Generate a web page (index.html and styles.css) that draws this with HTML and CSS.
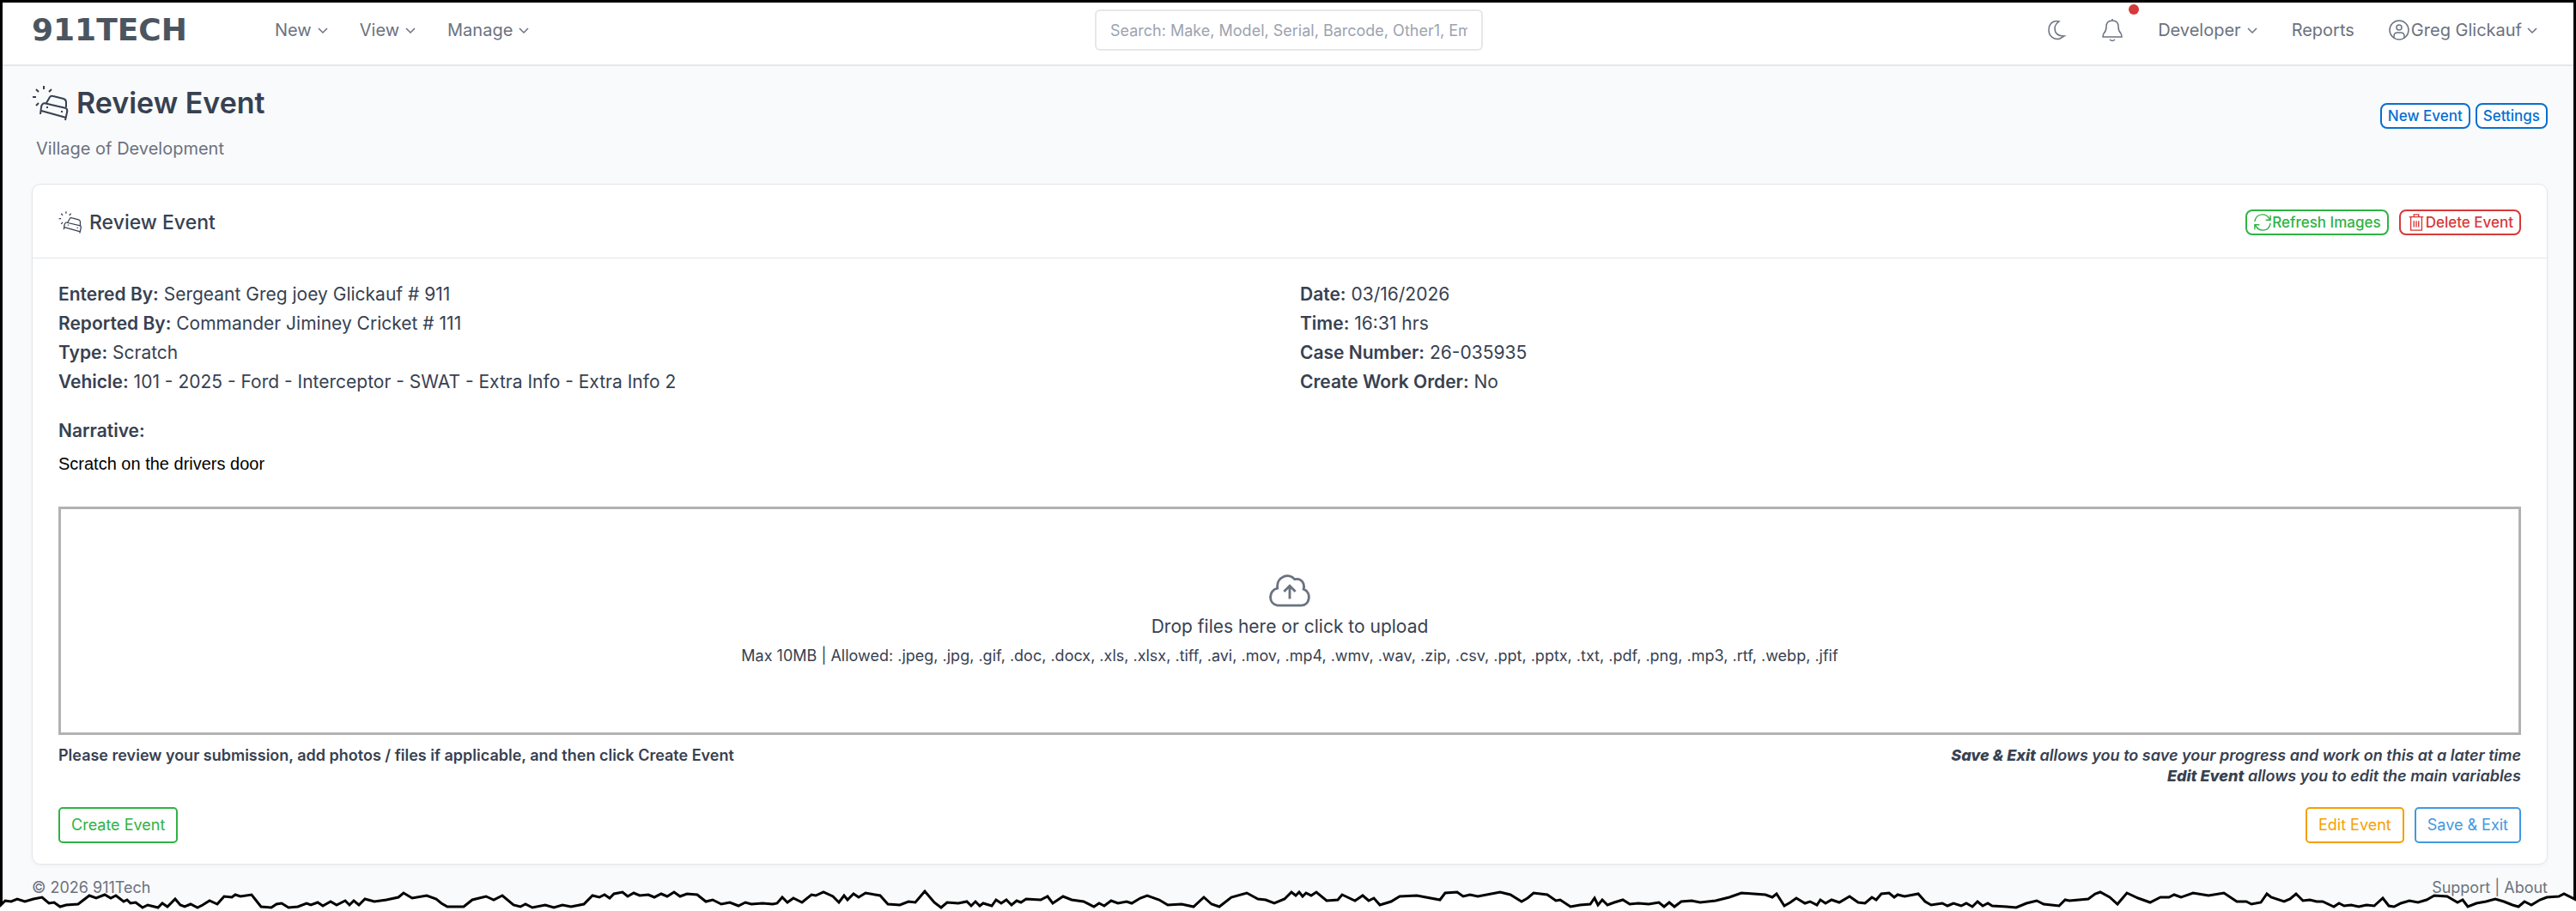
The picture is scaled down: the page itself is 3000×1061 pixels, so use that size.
FILE: index.html
```
<!DOCTYPE html>
<html lang="en">
<head>
    <meta charset="UTF-8">
    <meta name="viewport" content="width=device-width, initial-scale=1.0">
    <title>Review Event - 911Tech</title>
    <link rel="stylesheet" href="styles.css">
</head>
<body>
    <!-- shared icons -->
    <svg class="sprite" aria-hidden="true">
        <symbol id="i-chevron" viewBox="0 0 12 12"><path d="M1 4l5 5 5-5"/></symbol>
        <symbol id="i-crash" viewBox="0 0 44 44">
            <path d="M17 22l4-7q1-2 4-1l12 3q3 1 3 4v6M14 22l26 6M14 22q-3 2-3 5l-1 8M40 28q2 2 1 5l-2 9M11 31l29 8"/>
            <path d="M18 26v2M35 31v2M14 2v4M5 6l3 3M23 6l-3 3M1 15h4M5 25l3-3"/>
        </symbol>
    </svg>

    <div class="page">
        <header class="navbar">
            <a href="#" class="brand">911TECH</a>
            <nav class="menu">
                <a href="#">New <svg class="chevron"><use href="#i-chevron"/></svg></a>
                <a href="#">View <svg class="chevron"><use href="#i-chevron"/></svg></a>
                <a href="#">Manage <svg class="chevron"><use href="#i-chevron"/></svg></a>
            </nav>
            <input type="text" class="search" aria-label="Search" placeholder="Search: Make, Model, Serial, Barcode, Other1, Employee">
            <nav class="menu menu-right">
                <button type="button" class="icon-btn" aria-label="Dark mode">
                    <svg class="icon" viewBox="0 0 24 24"><path d="M15 2C8 0 3 5 3 12s6 12 13 10l5-3C13 19 10 15 10 10c0-4 2-6 5-8z"/></svg>
                </button>
                <button type="button" class="icon-btn bell" aria-label="Notifications">
                    <svg class="icon" viewBox="0 0 26 28"><path d="M13 1v2M2 22h22q0-2-1-4-3-3-3-8 0-7-7-7t-7 7q0 5-3 8-1 2-1 4zM10 25q3 3 6 0"/></svg>
                    <span class="dot"></span>
                </button>
                <a href="#">Developer <svg class="chevron"><use href="#i-chevron"/></svg></a>
                <a href="#">Reports</a>
                <a href="#" class="user">
                    <svg class="icon" viewBox="0 0 24 24"><circle cx="12" cy="12" r="11"/><circle cx="12" cy="9" r="3"/><path d="M6 21v-2q0-4 4-4h4q4 0 4 4v2"/></svg>Greg Glickauf
                    <svg class="chevron"><use href="#i-chevron"/></svg>
                </a>
            </nav>
        </header>

        <div class="page-header">
            <div>
                <h1><svg class="crash"><use href="#i-crash"/></svg>Review Event</h1>
                <p>Village of Development</p>
            </div>
            <div class="header-actions">
                <button type="button" class="btn btn-sm blue">New Event</button>
                <button type="button" class="btn btn-sm blue">Settings</button>
            </div>
        </div>

        <main class="card">
            <div class="card-header">
                <h2><svg class="crash"><use href="#i-crash"/></svg>Review Event</h2>
                <div class="card-actions">
                    <button type="button" class="btn btn-sm green">
                        <svg viewBox="0 0 24 24"><path d="M2 11C3 5 7 2 12 2q6 0 9 6M22 3v6h-6M22 13c-1 6-5 9-10 9q-6 0-9-6M2 21v-6h6"/></svg>Refresh Images
                    </button>
                    <button type="button" class="btn btn-sm red">
                        <svg viewBox="0 0 24 24"><path d="M3 5h18M9 5V2h6v3M5 5v17h14V5M9 10v8M12 10v8M15 10v8"/></svg>Delete Event
                    </button>
                </div>
            </div>

            <div class="card-body">
                <div class="details">
                    <div>
                        <div><b>Entered By:</b> Sergeant Greg joey Glickauf # 911</div>
                        <div><b>Reported By:</b> Commander Jiminey Cricket # 111</div>
                        <div><b>Type:</b> Scratch</div>
                        <div><b>Vehicle:</b> 101 - 2025 - Ford - Interceptor - SWAT - Extra Info - Extra Info 2</div>
                    </div>
                    <div>
                        <div><b>Date:</b> 03/16/2026</div>
                        <div><b>Time:</b> 16:31 hrs</div>
                        <div><b>Case Number:</b> 26-035935</div>
                        <div><b>Create Work Order:</b> No</div>
                    </div>
                </div>

                <h3>Narrative:</h3>
                <p class="narrative">Scratch on the drivers door</p>

                <button type="button" class="dropzone">
                    <svg viewBox="0 0 50 40"><path d="M10 38C-2 36-1 19 10 17 8 3 24-3 31 6c8-2 13 5 11 12C52 22 50 38 39 38zM25 30V15M18 21l7-7 7 7"/></svg>
                    <span class="drop-title">Drop files here or click to upload</span>
                    <span class="drop-hint">Max 10MB | Allowed: .jpeg, .jpg, .gif, .doc, .docx, .xls, .xlsx, .tiff, .avi, .mov, .mp4, .wmv, .wav, .zip, .csv, .ppt, .pptx, .txt, .pdf, .png, .mp3, .rtf, .webp, .jfif</span>
                </button>

                <div class="notes">
                    <div>Please review your submission, add photos / files if applicable, and then click Create Event</div>
                    <div class="notes-right">
                        <b>Save &amp; Exit</b> allows you to save your progress and work on this at a later time<br>
                        <b>Edit Event</b> allows you to edit the main variables
                    </div>
                </div>

                <div class="form-actions">
                    <button type="button" class="btn green">Create Event</button>
                    <div>
                        <button type="button" class="btn orange">Edit Event</button>
                        <button type="button" class="btn azure">Save &amp; Exit</button>
                    </div>
                </div>
            </div>
        </main>

        <footer>
            <span>© 2026 911Tech</span>
            <span><a href="#">Support</a> | <a href="#">About</a></span>
        </footer>

        <!-- torn bottom edge -->
        <svg class="torn" viewBox="0 0 3000 24" preserveAspectRatio="none" aria-hidden="true">
            <path d="M-10 19H0L6 13 13 14 20 11 29 14 39 11 49 9 57 16 63 15 70 20 77 18 91 17 104 7 112 10 122 6 129 10 135 7 144 14 148 12 152 16 158 15 166 21 172 18 184 21 189 16 195 20 204 11 210 18 215 20 222 17 230 21 236 18 244 13 253 17 261 8 270 9 274 6 280 8 293 6 304 20 316 21 322 17 328 16 336 21 347 20 357 16 362 18 370 15 376 19 385 14 392 18 402 13 407 18 412 13 418 18 425 11 436 14 450 12 464 9 470 4 480 10 497 7 508 11 514 16 521 20 540 20 550 12 566 8 575 12 585 7 598 18 606 20 612 17 620 21 635 18 645 21 655 18 665 20 680 17 690 7 698 9 704 6 710 10 715 5 725 3 731 8 738 4 745 7 755 6 762 9 770 5 777 8 785 3 792 8 800 5 812 6 822 14 830 12 840 17 850 15 860 19 868 15 875 17 888 16 900 17 905 16 911 9 917 15 924 10 934 15 945 6 950 7 959 3 970 8 977 15 983 7 987 12 994 5 1000 9 1008 4 1025 7 1034 17 1048 18 1058 14 1066 15 1077 2 1088 15 1096 21 1103 15 1116 16 1126 14 1131 19 1136 14 1141 19 1145 16 1155 19 1160 12 1166 16 1172 12 1178 18 1184 13 1189 15 1195 11 1212 12 1220 8 1226 16 1238 8 1248 12 1262 14 1274 20 1280 16 1286 19 1294 13 1302 16 1312 14 1318 16 1328 10 1336 7 1350 12 1360 18 1376 17 1390 20 1402 9 1411 17 1420 20 1434 9 1452 4 1465 11 1474 12 1484 16 1496 11 1504 3 1509 7 1513 3 1517 8 1521 4 1527 7 1533 3 1545 13 1558 12 1563 6 1578 13 1587 7 1594 13 1600 10 1607 18 1620 14 1630 8 1650 7 1677 12 1683 4 1697 3 1704 8 1712 6 1721 8 1747 3 1759 6 1772 14 1779 10 1786 4 1802 6 1812 13 1817 12 1829 20 1840 18 1852 17 1857 10 1861 18 1866 12 1872 18 1880 15 1890 12 1898 17 1908 16 1920 17 1932 15 1938 20 1944 15 1950 20 1958 14 1970 13 1980 15 1998 13 2014 9 2028 4 2056 6 2064 9 2069 5 2078 19 2085 15 2092 10 2102 16 2108 14 2116 18 2120 12 2126 16 2133 12 2142 15 2154 8 2164 15 2172 16 2180 9 2185 12 2191 5 2200 4 2206 9 2210 6 2218 8 2234 5 2242 14 2249 18 2262 16 2268 19 2275 16 2284 19 2290 16 2297 20 2303 14 2309 19 2315 16 2320 19 2337 20 2348 21 2360 16 2372 13 2380 17 2398 19 2405 12 2410 13 2432 11 2440 5 2446 3 2457 9 2466 17 2477 4 2490 10 2504 15 2516 9 2526 9 2532 6 2540 9 2554 4 2572 7 2590 4 2605 14 2616 14 2622 17 2633 15 2640 5 2645 9 2660 14 2667 11 2674 5 2682 13 2690 12 2698 14 2705 14 2718 20 2724 16 2730 19 2738 18 2747 20 2756 18 2765 19 2775 10 2782 19 2788 20 2796 16 2806 13 2816 15 2826 12 2835 7 2850 8 2862 15 2868 12 2874 20 2884 16 2895 14 2906 11 2916 14 2926 18 2933 20 2940 14 2948 18 2958 12 2966 9 2980 8 2986 5 3000 12H3010V40H-10z"/>
        </svg>
    </div>
</body>
</html>
```
FILE: styles.css
```
* { box-sizing: border-box; }
body {
    margin: 0;
    background-color: #fff;
    color: #374151;
    font-family: Inter, "Liberation Sans", sans-serif;
    font-size: 21px;
    line-height: 34px;
}
a { color: inherit; text-decoration: none; }
h1, h2, h3, p { margin: 0; }
b { font-weight: 600; }
svg { fill: none; stroke: currentColor; stroke-width: 2; }
button { font-family: inherit; cursor: pointer; }

.sprite { position: absolute; width: 0; height: 0; }
.page {
    position: relative;
    background-color: #f9fafb;
    border: 3px solid #000;
    border-bottom: 0;
}

/* top bar */
.navbar {
    display: grid;
    grid-template-columns: 1fr 452px 1fr;
    align-items: center;
    height: 74px;
    padding: 0 32px 8px 34px;
    background-color: #fff;
    border-bottom: 2px solid #e6e7e9;
    color: #6b7280;
    font-size: 20px;
}
.brand {
    grid-column: 1;
    grid-row: 1;
    color: #4b5560;
    font: bold 36px/40px "DejaVu Sans", sans-serif;
}
.menu {
    grid-column: 1;
    grid-row: 1;
    display: flex;
    align-items: center;
    gap: 37px;
    margin-left: 283px;
}
.menu a { display: flex; align-items: center; gap: 7px; }
.chevron { width: 12px; height: 12px; stroke-width: 1.5; }
.search {
    grid-column: 2;
    height: 48px;
    padding: 0 16px;
    border: 2px solid #e5e7eb;
    border-radius: 6px;
    font: 18px Inter, sans-serif;
}
.search::placeholder { color: #9ca3af; }
.menu-right { grid-column: 3; gap: 40px; margin: 0 10px 0 auto; }
.icon-btn {
    position: relative;
    display: flex;
    padding: 0;
    background: none;
    border: 0;
    color: inherit;
}
.icon { width: 24px; height: 24px; stroke-width: 1.5; }
.bell .icon { width: 26px; height: 28px; }
.dot {
    position: absolute;
    top: -16px;
    right: -18px;
    width: 12px;
    height: 12px;
    border-radius: 50%;
    background-color: #d63939;
}
.menu .user { gap: 2px; }
.user .chevron { margin-left: 4px; }

/* title row */
.page-header {
    display: flex;
    justify-content: space-between;
    padding: 18px 30px 0 34px;
    height: 137px;
}
.page-header h1 {
    display: flex;
    align-items: center;
    gap: 8px;
    font-size: 34px;
    font-weight: 600;
    line-height: 50px;
}
.page-header p { margin: 11px 0 0 5px; color: #6b7280; font-size: 20px; }
.crash { width: 44px; height: 44px; }
.header-actions { display: flex; gap: 6px; margin-top: 25px; }

.btn {
    display: inline-flex;
    align-items: center;
    justify-content: center;
    height: 42px;
    padding: 0 13px;
    background-color: #fff;
    border: 2px solid currentColor;
    border-radius: 5px;
    font-size: 18px;
    line-height: 24px;
}
.btn-sm {
    height: 30px;
    padding: 0 7px;
    border-radius: 8px;
    font-size: 17px;
    font-weight: 500;
}
.btn svg { width: 22px; height: 22px; stroke-width: 1.5; }
.blue { color: #066fd1; }
.green { color: #2fb344; }
.red { color: #d63939; }
.orange { color: #f59f00; }
.azure { color: #4299e1; }

/* event card */
.card {
    margin: 0 30px 0 34px;
    background-color: #fff;
    border: 1px solid #e2e6eb;
    border-radius: 10px;
    box-shadow: 0 2px 4px rgba(30, 41, 59, 0.04);
}
.card-header {
    display: flex;
    align-items: center;
    justify-content: space-between;
    height: 86px;
    padding: 2px 30px 0;
    border-bottom: 1px solid #e2e6eb;
}
.card-header h2 {
    display: flex;
    align-items: center;
    gap: 8px;
    font-size: 23px;
    font-weight: 500;
}
.card-header .crash { width: 28px; height: 28px; }
.card-actions { display: flex; gap: 12px; }
.card-body { padding: 25px 30px 24px; }
.details {
    display: grid;
    grid-template-columns: 1fr 1fr;
    gap: 24px;
}
h3 { margin-top: 23px; font-size: 21px; font-weight: 600; }
.narrative {
    margin-top: 4px;
    color: #000;
    font-family: "Liberation Sans", Arial, sans-serif;
    font-size: 20px;
}
.dropzone {
    display: flex;
    flex-direction: column;
    align-items: center;
    justify-content: center;
    width: 100%;
    height: 266px;
    margin-top: 33px;
    padding-top: 4px;
    background-color: #fff;
    border: 3px solid #b2b2b2;
    color: #374151;
}
.dropzone svg { width: 48px; height: 38px; stroke-width: 3; color: #6b7280; }
.drop-title { margin-top: 6px; font-size: 21px; line-height: 34px; }
.drop-hint { font-size: 18px; line-height: 34px; }
.notes {
    display: flex;
    justify-content: space-between;
    margin-top: 12px;
    font-size: 18px;
    font-weight: 600;
    line-height: 24px;
}
.notes-right { font-style: italic; text-align: right; }
.notes b { font-weight: 800; }
.form-actions {
    display: flex;
    justify-content: space-between;
    margin-top: 24px;
}
.form-actions div { display: flex; gap: 12px; }

footer {
    display: flex;
    justify-content: space-between;
    height: 53px;
    padding: 10px 30px 0 34px;
    color: #6b7280;
    font-size: 18px;
}
.torn {
    position: absolute;
    left: -3px;
    bottom: 0;
    width: calc(100% + 6px);
    height: 24px;
    fill: #fff;
    stroke: #000;
    stroke-width: 3;
}
```
